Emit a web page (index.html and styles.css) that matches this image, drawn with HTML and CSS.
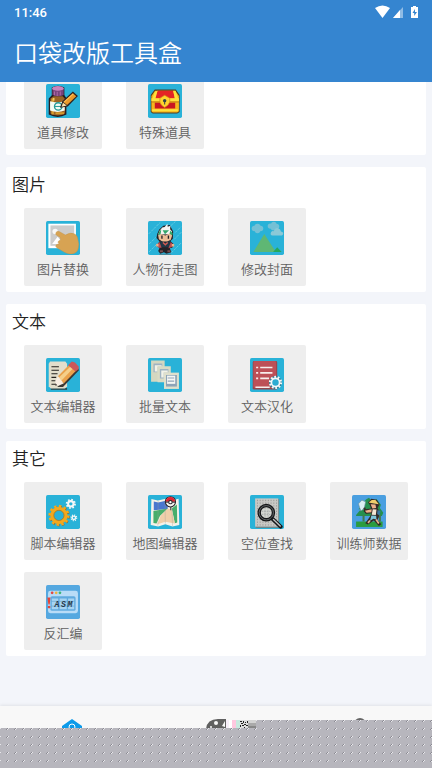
FILE: index.html
```html
<!DOCTYPE html>
<html lang="zh-CN">
<head>
<meta charset="utf-8">
<meta name="viewport" content="width=device-width, initial-scale=1">
<title>口袋改版工具盒</title>
<link rel="stylesheet" href="styles.css">
</head>
<body>
<div class="app">
  <header class="top">
    <div class="status">
      <span>11:46</span>
      <svg class="status-icons" viewBox="0 0 46 14" aria-hidden="true">
        <path fill="#fff" d="M0 3Q7.500-2 15 3L7.500 13Z"/>
        <path fill="#fff" opacity=".45" d="M18 13 28 2v11Z"/>
        <path fill="#fff" d="M18 13 25 5v8Z"/>
        <path fill="#fff" d="M36 2h2V1h3v1h2v11h-7Z"/>
        <path fill="#3585d0" d="M40 4 37.500 8h1.700v3L42 7h-2Z"/>
      </svg>
    </div>
    <h1>口袋改版工具盒</h1>
  </header>

  <main class="content">
    <section class="card card-scrolled">
      <div class="tools">
        <button class="tool" type="button">
          <svg class="icon" viewBox="0 0 100 100" aria-hidden="true">
            <rect width="100" height="100" rx="5" fill="#29b2d8"/>
            <path fill="#281c20" d="M17 10Q35 0 54 10V32L60 42V90Q35 104 8 90V43L17 33Z"/>
            <path fill="#9a6326" d="M13 43 22 36H49L56 44V87Q35 98 13 87Z"/>
            <path fill="#d69b30" d="M16 43h7v47h-7ZM28 83h25v6H28Z"/>
            <path fill="#f0ca61" d="M20 41h5v8h-5Z"/>
            <path fill="#79447c" d="M19 12H52V32Q36 40 19 32Z"/>
            <ellipse cx="35" cy="13" rx="17" ry="7" fill="#ca84bd"/>
            <path stroke="#ad68a6" stroke-width="3" d="M25 22v11M33 23v12M42 22v11"/>
            <path fill="#f5fbf4" d="M12 51Q34 58 55 50V78Q34 86 12 78Z"/>
            <circle cx="36" cy="66" r="11" fill="none" stroke="#249b98" stroke-width="4"/>
            <path stroke="#249b98" stroke-width="3" d="M25 66h22"/>
            <path fill="#2e2421" d="M41 70 48 51 79 22 94 35 64 66Z"/>
            <path fill="#e99a2c" d="M51 53 79 27 89 36 62 62Z"/>
            <path stroke="#ffc45a" stroke-width="3" d="M53 53 80 29"/>
            <path fill="#ffe3ac" d="M50 55 61 63 46 67Z"/>
          </svg>
          <span>道具修改</span>
        </button>
        <button class="tool" type="button">
          <svg class="icon" viewBox="0 0 100 100" aria-hidden="true">
            <rect width="100" height="100" rx="5" fill="#29b2d8"/>
            <path fill="#4c3a20" d="M20 16H82L93 32V82L86 87H14L8 82V32Z"/>
            <path fill="#f5b51d" d="M21 20H80L91 35V80L86 84H14L10 80V35Z"/>
            <path fill="#e52424" d="M28 20H74L79 43H20Z"/>
            <path fill="#c91620" d="M20 55H80V72H20Z"/>
            <path fill="#ffe13b" d="M10 42H91V50H10ZM12 74H88V80H12ZM20 23l8-3-6 23h-9ZM74 20h7l8 23H79Z"/>
            <path stroke="#a96718" stroke-width="2" d="M10 53H91"/>
            <path fill="#ffd42e" stroke="#d18b1c" stroke-width="2" d="M49 33 64 42V53Q61 63 49 69 37 63 35 53V42Z"/>
            <circle cx="49" cy="49" r="5" fill="#344449"/><path stroke="#344449" stroke-width="3" d="M49 49v11"/>
          </svg>
          <span>特殊道具</span>
        </button>
      </div>
    </section>

    <section class="card">
      <h2>图片</h2>
      <div class="tools">
        <button class="tool" type="button">
          <svg class="icon" viewBox="0 0 100 100" aria-hidden="true">
            <rect width="100" height="100" rx="5" fill="#29b2d8"/>
            <path fill="#fff" d="M7 8H88V80H7Z"/>
            <path fill="#ccc" d="M13 13H83V73H13Z"/>
            <circle cx="27" cy="31" r="8" fill="#f8f8f8"/>
            <path fill="#fff" d="M18 68 34 46 52 68Z"/>
            <path fill="#d7a353" stroke="#bd8d40" d="M29 35Q31 28 39 31L57 41Q72 32 84 38 93 42 94 55 99 69 95 80 93 93 80 96 66 99 56 93L32 79Q26 75 30 70L38 67 35 62Q37 57 43 56L41 48 32 43Q27 40 29 35Z"/>
          </svg>
          <span>图片替换</span>
        </button>
        <button class="tool" type="button">
          <svg class="icon" viewBox="0 0 100 100" aria-hidden="true">
            <rect width="100" height="100" rx="5" fill="#29b2d8"/>
            <path stroke="#7bd7e9" stroke-width="2" stroke-dasharray="8 3" d="M2 38 36 4M3 91 30 64M68 94 99 63M77 54 99 32M67 14 81 1M4 67 23 48M80 34 97 17"/>
            <path fill="#242126" d="M27 38 33 25 45 14 64 12 74 31 73 52 66 59 77 70 71 79 64 80 69 92 54 96 47 92 36 96 30 88 34 79 24 73 34 60 25 50Z"/>
            <path fill="#f5f4f2" d="M34 29 42 19 49 18 57 8 58 17 66 14 65 24 71 31 70 39 30 40Z"/>
            <path fill="#32a66a" d="M32 32 39 25 37 40 30 45ZM43 27H62L50 39ZM66 28 73 37 70 45 63 38Z"/>
            <path fill="#ecbd96" d="M30 42 38 38 51 43 63 37 71 43 67 55 57 60H42L32 54Z"/>
            <path stroke="#202026" stroke-width="4" d="M41 43v9M60 43v9"/>
            <path fill="#203847" d="M36 58 50 64 65 58 67 77H35Z"/>
            <path fill="#be4c52" d="M25 70 34 62 40 79H31ZM67 62 76 71 69 77 60 80Z"/>
            <path fill="#e9b58b" d="M24 68h7v7h-7ZM70 68h7v7h-7Z"/>
            <path fill="none" stroke="#d35a53" stroke-width="4" d="m44 63 7 7 7-7"/>
            <path stroke="#794b4c" stroke-width="6" d="M35 89h9M57 89h9"/>
            <path stroke="#527f8e" stroke-width="3" d="M33 98h35"/>
          </svg>
          <span>人物行走图</span>
        </button>
        <button class="tool" type="button">
          <svg class="icon" viewBox="0 0 100 100" aria-hidden="true">
            <rect width="100" height="100" rx="5" fill="#29b2d8"/>
            <g fill="#75c0d5"><circle cx="13" cy="22" r="8"/><circle cx="22" cy="17" r="9"/><circle cx="31" cy="22" r="8"/><circle cx="22" cy="28" r="8"/><circle cx="60" cy="15" r="8"/><circle cx="70" cy="10" r="8"/><circle cx="78" cy="16" r="8"/><circle cx="69" cy="20" r="8"/></g>
            <path fill="#8bc9d7" d="M66 43Q58 41 62 33 65 28 70 30 74 18 83 21 90 23 91 31 100 33 97 40L94 43Z"/>
            <path fill="#5fb774" d="M10 91 42 38 76 91Z"/>
            <path fill="#26a85b" d="M68 91 80 77 93 91Z"/>
          </svg>
          <span>修改封面</span>
        </button>
      </div>
    </section>

    <section class="card">
      <h2>文本</h2>
      <div class="tools">
        <button class="tool" type="button">
          <svg class="icon" viewBox="0 0 100 100" aria-hidden="true">
            <rect width="100" height="100" rx="5" fill="#29b2d8"/>
            <path fill="#29251f" d="M14 89H62V93H14Z"/>
            <path fill="#e2decb" d="M12 10H57L62 17V83L56 90H14L8 83V17Z"/>
            <path stroke="#25231f" stroke-width="3" d="M16 26h22M16 36h22M16 46h18M16 57h14M16 67h12M16 77h14"/>
            <path fill="#3b3834" d="M94 29 97 36 50 85 33 85Z"/>
            <path fill="#e9a14b" d="M35 54 69 19 89 37 52 75Z"/>
            <path fill="#f5cf89" d="M38 57 73 24 80 30 45 67Z"/>
            <path fill="#ca5859" d="M65 21 76 10 85 13 96 25 96 32 87 40Z"/>
            <path fill="#f8eee3" d="M35 54 52 75 38 81 27 79 28 67Z"/>
            <path fill="#28211d" d="M28 74 33 80 27 81Z"/>
          </svg>
          <span>文本编辑器</span>
        </button>
        <button class="tool" type="button">
          <svg class="icon" viewBox="0 0 100 100" aria-hidden="true">
            <rect width="100" height="100" rx="5" fill="#29b2d8"/>
            <path fill="#d4d7c0" d="M9 7H49V28H30V70H9Z"/>
            <path fill="#9fb3c2" d="M16 16H42V26H28V42H16Z"/>
            <path fill="#f3f3e8" d="M20 21H40V26H28V40H20Z"/>
            <path fill="#d9dbc5" d="M28 24H67V45H48V71H28Z"/>
            <path fill="#9fb3c2" d="M35 32H60V43H46V60H35Z"/>
            <path fill="#f3f3e8" d="M39 37H58V43H46V57H39Z"/>
            <path fill="#dfe0cc" d="M47 43H91V91H47Z"/>
            <path fill="#8da3b8" d="M53 50H85V84H53Z"/>
            <path fill="#f6f7f4" d="M56 52H80V76H56Z"/>
            <path stroke="#91a5b8" stroke-width="3" d="M58 59h19M58 68h19"/>
          </svg>
          <span>批量文本</span>
        </button>
        <button class="tool" type="button">
          <svg class="icon" viewBox="0 0 100 100" aria-hidden="true">
            <rect width="100" height="100" rx="5" fill="#29b2d8"/>
            <rect x="8" y="9" width="72" height="84" rx="4" fill="#95464d"/>
            <rect x="10" y="9" width="67" height="79" rx="4" fill="#bd5057"/>
            <path stroke="#f7edec" stroke-width="5" d="M18 28h6M30 28h36M18 44h6M30 44h36M18 60h6M30 60h26M16 86h42"/>
            <circle cx="75" cy="72" r="19" fill="#328097"/>
            <circle cx="75" cy="72" r="16" fill="none" stroke="#f5f7f8" stroke-width="7" pathLength="20" stroke-dasharray="1 1"/>
            <circle cx="75" cy="72" r="12" fill="#2bacd2" stroke="#f5f7f8" stroke-width="5"/>
          </svg>
          <span>文本汉化</span>
        </button>
      </div>
    </section>

    <section class="card">
      <h2>其它</h2>
      <div class="tools">
        <button class="tool" type="button">
          <svg class="icon" viewBox="0 0 100 100" aria-hidden="true">
            <rect width="100" height="100" rx="5" fill="#29b2d8"/>
            <g fill="none"><circle cx="40" cy="62" r="26" stroke="#8c713c" stroke-width="9" pathLength="24" stroke-dasharray="1 1"/>
            <circle cx="38" cy="60" r="26" stroke="#f5a91d" stroke-width="10" pathLength="24" stroke-dasharray="1 1"/>
            <circle cx="38" cy="60" r="20" stroke="#f3a81e" stroke-width="11"/>
            <circle cx="38" cy="60" r="15" stroke="#946f2c" stroke-width="2"/>
            <circle cx="73" cy="26" r="12" stroke="#f5f7f7" stroke-width="6" pathLength="16" stroke-dasharray="1 1"/>
            <circle cx="73" cy="26" r="8" stroke="#f5f7f7" stroke-width="6"/>
            <circle cx="82" cy="67" r="8" stroke="#f5f7f7" stroke-width="4" pathLength="16" stroke-dasharray="1 1"/>
            <circle cx="82" cy="67" r="5" stroke="#f5f7f7" stroke-width="4"/></g>
          </svg>
          <span>脚本编辑器</span>
        </button>
        <button class="tool" type="button">
          <svg class="icon" viewBox="0 0 100 100" aria-hidden="true">
            <rect width="100" height="100" rx="5" fill="#29b2d8"/>
            <path fill="#f6f2e9" d="M10 12 29 16 49 12 70 16 90 11 92 88 72 93 51 86 30 93 8 88Z"/>
            <path fill="#4a77cf" d="M17 19 30 22 49 18 58 21V41L17 45Z"/>
            <path fill="#47ae6b" d="M16 47 58 40 35 62 25 84 16 82ZM70 40 85 28 86 81 79 83Z"/>
            <path fill="#efceaa" d="M58 40 70 43 79 84 51 79 28 86 37 61Z"/>
            <path stroke="#9b9f94" d="M30 18 29 90M50 16 51 84M70 18 72 91"/>
            <path stroke="#353739" stroke-width="3" d="M67 29V45"/>
            <circle cx="66" cy="20" r="15" fill="#f7f6f4" stroke="#242327" stroke-width="3"/>
            <path fill="#df2433" d="M52 20a14 14 0 0 1 28 0Z"/>
            <path stroke="#242327" stroke-width="3" d="M51 21h30"/>
            <circle cx="66" cy="21" r="5" fill="#fff" stroke="#242327" stroke-width="3"/>
          </svg>
          <span>地图编辑器</span>
        </button>
        <button class="tool" type="button">
          <svg class="icon" viewBox="0 0 100 100" aria-hidden="true">
            <rect width="100" height="100" rx="5" fill="#29b2d8"/>
            <path fill="#6e8588" d="M17 12H86V97H17Z"/>
            <path fill="#c8c8c5" d="M15 10H83V93H15Z"/>
            <path stroke="#898b88" stroke-width="2" stroke-dasharray="4 4" d="M22 14V92M30 14V92M38 14V92M46 14V92M54 14V92M62 14V92M70 14V92M78 14V92"/>
            <circle cx="48" cy="52" r="21" fill="#d7d9d5" fill-opacity=".8" stroke="#161719" stroke-width="10"/>
            <circle cx="48" cy="52" r="21" fill="none" stroke="#858b8c" stroke-width="2"/>
            <path stroke="#989d9d" stroke-width="2" stroke-dasharray="4 3" d="M35 48h26M35 57h26M44 38v28M53 38v28"/>
            <path stroke="#151719" stroke-width="12" stroke-linecap="round" d="M67 71 90 93"/>
            <path stroke="#c0c2c3" stroke-width="4" stroke-linecap="round" d="M69 72 89 91"/>
          </svg>
          <span>空位查找</span>
        </button>
        <button class="tool" type="button">
          <svg class="icon" viewBox="0 0 100 100" aria-hidden="true">
            <rect width="100" height="100" rx="5" fill="#4a9fe0"/>
            <path fill="#25904e" d="M12 59 26 42 19 42 34 22 41 13 50 8 60 20 72 12 85 29 82 38 92 52 88 62H12Z"/>
            <path fill="#2b9c3f" d="M12 78H90V94H12Z"/>
            <path fill="#44794d" d="M31 59h6v19h-6ZM79 59h6v19h-6Z"/>
            <path fill="#dbeff4" stroke="#648e9d" stroke-width="2" d="M19 26 29 15 40 20 36 40 26 47 22 36Z"/>
            <path stroke="#36352e" stroke-width="6" d="M36 37 43 54"/>
            <path fill="#342a26" d="M47 22 57 11 73 14 81 27 75 39 80 46 79 65 75 73 86 86 79 91 64 75 47 87 39 83 52 65 58 54 42 55 34 48 37 42 56 40 52 29Z"/>
            <path fill="#f0ce6b" d="M49 22 58 15 69 15 79 27 64 25Z"/>
            <path fill="#efb18b" d="M55 27 69 28 71 38 60 40ZM38 46 58 42 57 51 43 52Z"/>
            <path fill="#f2e8d5" d="M61 42 72 43 70 59 58 58Z"/>
            <path fill="#3978a3" d="M75 44 84 47 81 60 74 56Z"/>
            <path fill="#7cc6db" d="M57 60 71 61 72 72 63 70 53 76Z"/>
            <path stroke="#e8b38e" stroke-width="5" d="M53 75 47 82M71 72l8 12"/>
          </svg>
          <span>训练师数据</span>
        </button>
        <button class="tool" type="button">
          <svg class="icon" viewBox="0 0 100 100" aria-hidden="true">
            <rect width="100" height="100" rx="5" fill="#55a8e0"/>
            <rect x="6" y="17" width="88" height="66" rx="7" fill="#b9dcf7"/>
            <rect x="13" y="33" width="74" height="43" rx="5" fill="#60aadf"/>
            <path fill="#a7d4f2" d="M17 40H36V71H17ZM40 40H61V71H40ZM65 40H83V71H65Z"/>
            <path stroke="#67a7d2" stroke-width="2" d="M15 48H84M15 62H84"/>
            <circle cx="18" cy="23" r="4" fill="#e34843"/><circle cx="30" cy="23" r="4" fill="#efb442"/><circle cx="41" cy="23" r="4" fill="#3bb47c"/>
            <path fill="#e84336" d="M4 37H13L11 57H7Z"/><circle cx="9" cy="65" r="4" fill="#e84336"/>
            <text class="asm" x="25 44 63" y="66">ASM</text>
          </svg>
          <span>反汇编</span>
        </button>
      </div>
    </section>
  </main>

  <nav class="tabs">
    <button class="tab" type="button" aria-label="主页">
      <svg viewBox="0 0 24 24" aria-hidden="true"><path fill="#0d9bea" d="M12 1 22 8V22H2V8Z"/><circle cx="12" cy="9" r="3" fill="none" stroke="#fff" stroke-width="1"/></svg>
    </button>
    <button class="tab" type="button" aria-label="主题">
      <svg viewBox="0 0 24 24" aria-hidden="true"><path fill="#606060" d="M2 11Q3 1 14 1h8v9l-3 10H8Q1 18 2 11Z"/><circle cx="12" cy="5" r="2" fill="#f8f8f8"/><circle cx="7" cy="9" r="1" fill="#f8f8f8"/><path fill="#f8f8f8" d="m18 8 3-5v6Z"/></svg>
    </button>
    <button class="tab" type="button" aria-label="我的">
      <svg viewBox="0 0 24 24" aria-hidden="true"><circle cx="12" cy="6" r="5" fill="none" stroke="#666" stroke-width="2"/></svg>
    </button>
    <div class="veil" aria-hidden="true">
      <svg class="veil-edge" viewBox="0 0 30 8">
        <path fill="#fff" d="M0 0H30V8H0Z"/>
        <path fill="#f6eef9" d="M0 0h3v8H0Z"/>
        <path fill="#ffc8df" d="M6 0h4v8H6Z"/><path fill="#c8eadf" d="M10 0h4v8h-4Z"/>
        <path fill="#dedede" d="M14 0h8v8h-8Z"/>
        <path fill="#222" d="M14 1h2v1h-2ZM17 1h1v2h-1ZM19 2h1v1h-1ZM21 1h1v2h-1ZM15 3h2v1h-2ZM18 4h2v1h-2ZM14 5h1v2h-1ZM16 5h2v1h-2ZM20 5h2v1h-2ZM18 7h1v1h-1Z"/>
        <path fill="#d4d4d4" d="M22 0h8v3h-8Z"/><path fill="#aaa" d="M22 3h8v3h-8Z"/><path fill="#888" d="M22 6h8v2h-8Z"/>
      </svg>
      <svg class="veil-side">
        <defs>
          <pattern id="grain" width="8" height="8" patternUnits="userSpaceOnUse">
            <path fill="#b7b6bd" d="M0 0h8v8H0Z"/>
            <path fill="#e6e6ea" d="M0 0h1v1H0ZM7 1h1v1H7Z"/>
            <path fill="#8b8a92" d="M7 0h1v1H7ZM6 1h1v1H6Z"/>
          </pattern>
        </defs>
        <rect width="100%" height="100%" fill="url(#grain)"/>
      </svg>
      <svg class="veil-base"><rect width="100%" height="100%" fill="url(#grain)"/></svg>
    </div>
  </nav>
</div>
</body>
</html>
```
FILE: styles.css
```css
* {
  box-sizing: border-box;
}

body {
  margin: 0;
  background: #f3f5fa;
  font-family: Roboto, "Noto Sans CJK SC", sans-serif;
}

h1,
h2 {
  margin: 0;
  font-weight: 350;
}

button {
  padding: 0;
  border: 0;
  font: inherit;
}

svg {
  display: block;
}

.app {
  display: flex;
  flex-direction: column;
  height: 100vh;
  overflow: hidden;
}

.top {
  flex: none;
  padding-bottom: 8px;
  background: #3585d0;
  color: #fff;
}

.status {
  display: flex;
  align-items: center;
  justify-content: space-between;
  height: 24px;
  padding: 0 11px 0 14px;
  font-size: 13px;
  font-weight: 500;
}

.status-icons {
  width: 46px;
  height: 14px;
}

.top h1 {
  padding: 10px 14px 0;
  font-size: 24px;
  line-height: 40px;
}

.content {
  flex: 1;
  min-height: 0;
  padding: 0 6px;
  overflow: hidden;
}

.card {
  margin-bottom: 12px;
  padding: 6px 18px;
  border-radius: 2px;
  background: #fff;
}

.card-scrolled {
  margin-top: -11px;
  padding-top: 0;
}

.card h2 {
  margin: 0 -12px 11px;
  color: #222;
  font-size: 17px;
  line-height: 24px;
}

.tools {
  display: grid;
  grid-template-columns: repeat(4, 1fr);
  gap: 12px 24px;
}

.tool {
  display: flex;
  flex-direction: column;
  align-items: center;
  gap: 6px;
  height: 78px;
  padding-top: 13px;
  border-radius: 2px;
  background: #eee;
  color: #606060;
  font-size: 13px;
  font-weight: 350;
  line-height: 18px;
  white-space: nowrap;
}

.icon {
  width: 34px;
  height: 34px;
}

.asm {
  font: italic bold 24px "Liberation Mono", monospace;
  fill: #26384a;
}

.tabs {
  position: relative;
  display: grid;
  flex: none;
  grid-template-columns: repeat(3, 1fr);
  height: 62px;
  background: #f8f8f8;
  box-shadow: 0 -1px 3px rgba(0, 0, 0, 0.08);
}

.tab {
  display: flex;
  justify-content: center;
  padding-top: 12px;
  background: none;
}

.tab svg {
  width: 24px;
  height: 24px;
}

.veil {
  position: absolute;
  right: 0;
  bottom: 0;
  left: 0;
  display: grid;
  grid-template-columns: 226fr 30fr 176fr;
  grid-template-rows: 8px 40px;
}

.veil-edge {
  grid-column: 2;
  width: 100%;
  height: 8px;
}

.veil-side {
  grid-column: 3;
  width: 100%;
  height: 8px;
}

.veil-base {
  grid-column: 1 / -1;
  width: 100%;
  height: 40px;
}
```
